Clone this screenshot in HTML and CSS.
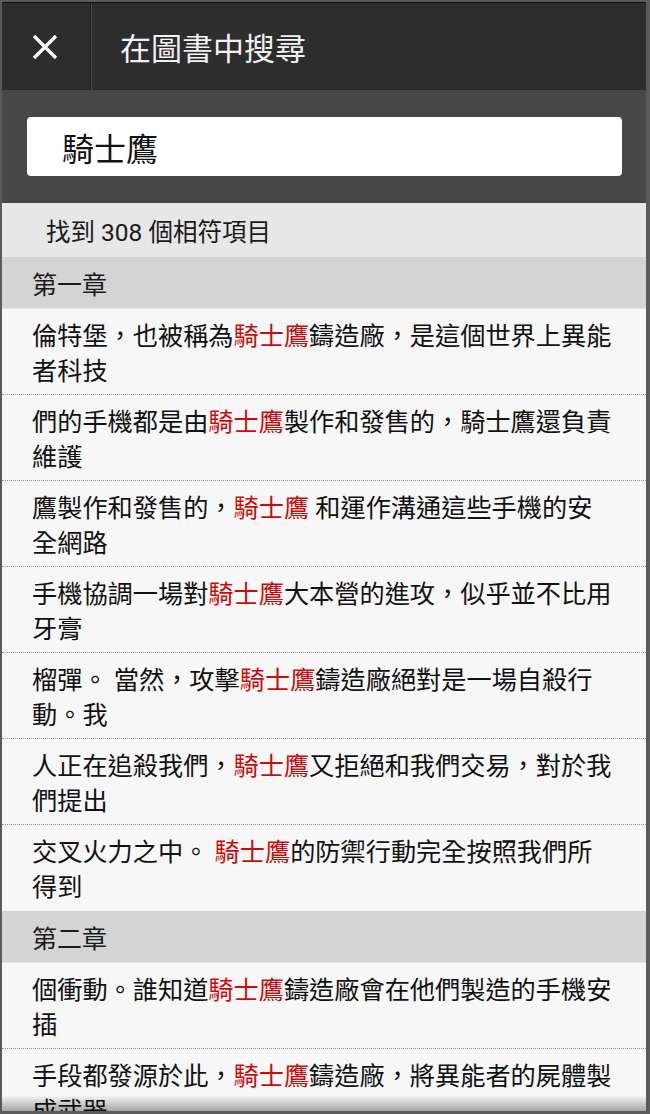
FILE: index.html
```html
<!DOCTYPE html>
<html lang="zh-Hant">
<head>
<meta charset="utf-8">
<title>在圖書中搜尋</title>
<link rel="stylesheet" href="styles.css">
</head>
<body>
<div class="screen">
  <header class="topbar">
    <div class="close">
      <svg width="26" height="26" viewBox="0 0 26 26" aria-hidden="true">
        <path d="M2 2 L24 24 M24 2 L2 24" stroke="#ffffff" stroke-width="3.2" stroke-linecap="butt" fill="none"/>
      </svg>
    </div>
    <div class="title">在圖書中搜尋</div>
  </header>
  <div class="searcharea">
    <div class="searchbox">騎士鷹</div>
  </div>
  <div class="count">找到 308 個相符項目</div>
  <div class="chapter">第一章</div>
  <div class="item">倫特堡，也被稱為<span class="hl">騎士鷹</span>鑄造廠，是這個世界上異能<br>者科技</div>
  <div class="item">們的手機都是由<span class="hl">騎士鷹</span>製作和發售的，騎士鷹還負責<br>維護</div>
  <div class="item">鷹製作和發售的，<span class="hl">騎士鷹</span> 和運作溝通這些手機的安<br>全網路</div>
  <div class="item">手機協調一場對<span class="hl">騎士鷹</span>大本營的進攻，似乎並不比用<br>牙膏</div>
  <div class="item">榴彈。 當然，攻擊<span class="hl">騎士鷹</span>鑄造廠絕對是一場自殺行<br>動。我</div>
  <div class="item">人正在追殺我們，<span class="hl">騎士鷹</span>又拒絕和我們交易，對於我<br>們提出</div>
  <div class="item last">交叉火力之中。 <span class="hl">騎士鷹</span>的防禦行動完全按照我們所<br>得到</div>
  <div class="chapter">第二章</div>
  <div class="item">個衝動。誰知道<span class="hl">騎士鷹</span>鑄造廠會在他們製造的手機安<br>插</div>
  <div class="item">手段都發源於此，<span class="hl">騎士鷹</span>鑄造廠，將異能者的屍體製<br>成武器</div>
</div>
</body>
</html>
```
FILE: styles.css
```css
html, body {
  margin: 0;
  padding: 0;
  background: #5a5a5a;
}
body {
  width: 650px;
  height: 1114px;
  overflow: hidden;
  font-family: Roboto, "Noto Sans CJK TC", sans-serif;
}
.screen {
  position: relative;
  margin: 2px 4px 0 2px;
  height: 1108px;
  overflow: hidden;
  border-top: 1px solid #0e0e0e;
  background: #f7f7f7;
}
.screen::after {
  content: "";
  position: absolute;
  left: 0;
  right: 0;
  bottom: 0;
  height: 16px;
  background: linear-gradient(to bottom, rgba(0,0,0,0), rgba(0,0,0,0.32));
}
.topbar {
  display: flex;
  height: 87px;
  background: #2d2d2d;
}
.close {
  width: 89px;
  display: flex;
  align-items: center;
  justify-content: center;
  padding-right: 3px;
  box-sizing: border-box;
  border-right: 1px solid #1c1c1c;
}
.title {
  flex: 1;
  display: flex;
  align-items: center;
  padding-left: 28px;
  border-left: 1px solid #4a4a4a;
  color: #f2f2f2;
  font-size: 31px;
}
.searcharea {
  height: 113px;
  background: #474747;
  padding: 27px 24px 0 25px;
  box-sizing: border-box;
}
.searchbox {
  height: 59px;
  background: #ffffff;
  border-radius: 4px;
  display: flex;
  align-items: center;
  padding-left: 35px;
  font-size: 32px;
  color: #111;
}
.count {
  height: 54px;
  background: #e7e7e7;
  display: flex;
  align-items: center;
  padding-left: 44px;
  font-size: 24.5px;
  color: #1a1a1a;
}
.chapter {
  height: 52px;
  background: #d4d4d4;
  display: flex;
  align-items: center;
  padding-left: 30px;
  font-size: 25px;
  color: #1a1a1a;
  box-sizing: border-box;
  border-bottom: 1px solid #e2e2e2;
}
.item {
  background: #f7f7f7;
  padding: 10px 20px 5px 30px;
  font-size: 25.2px;
  line-height: 35px;
  color: #111;
  border-bottom: 1px dotted #999999;
  white-space: nowrap;
}
.item.last {
  border-bottom: none;
  height: 71px;
  box-sizing: content-box;
}
.hl {
  color: #c80d0d;
}
```
